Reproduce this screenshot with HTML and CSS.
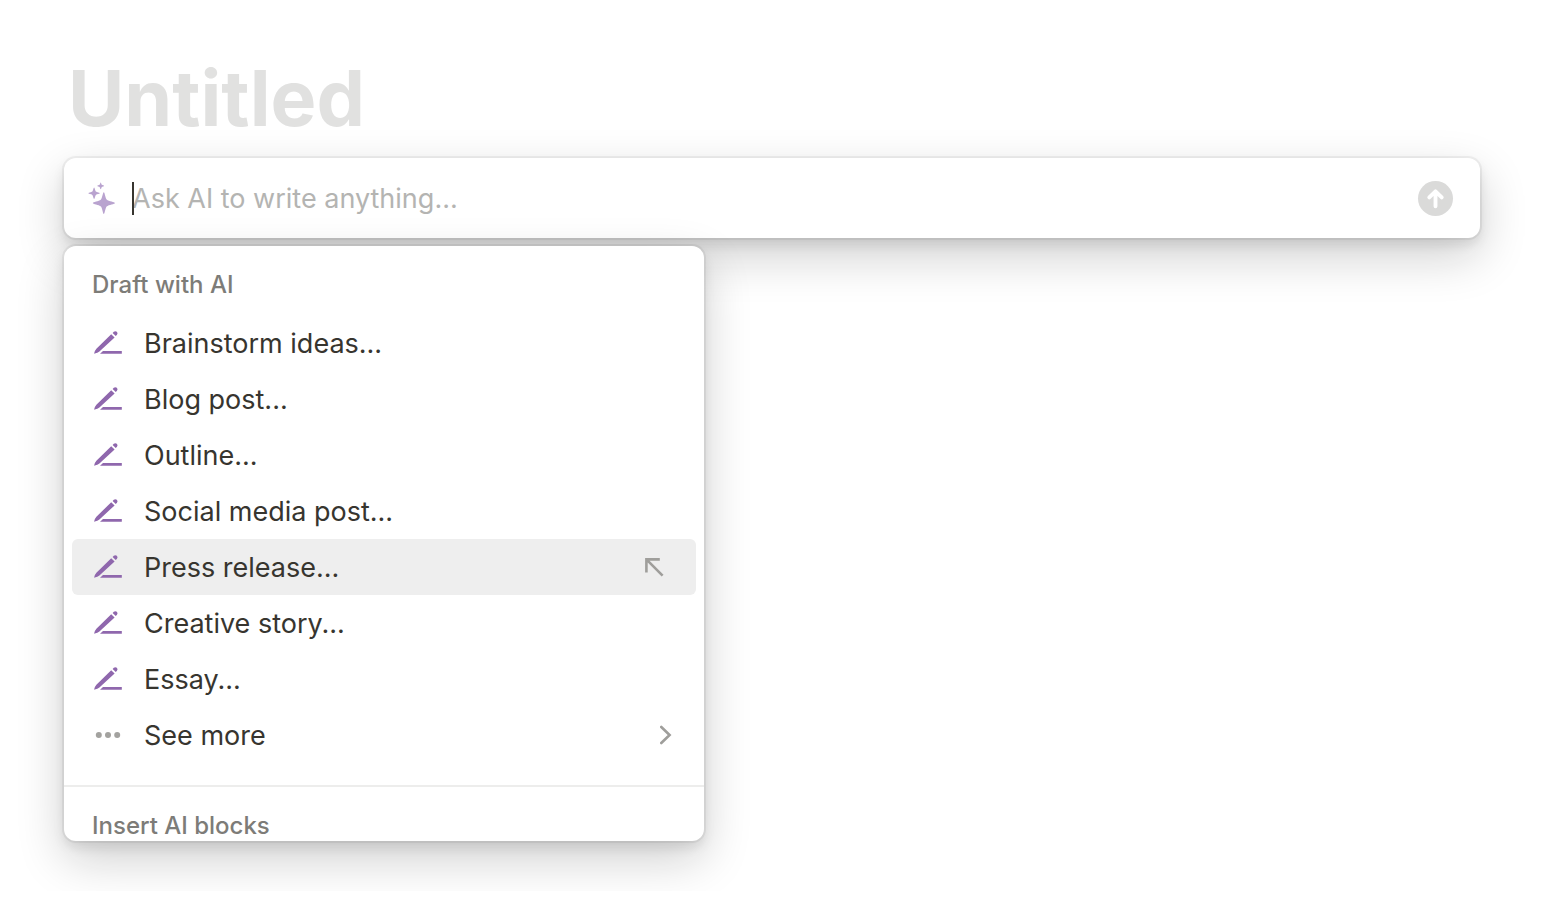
FILE: index.html
```html
<!DOCTYPE html>
<html lang="en">
<head>
    <meta charset="UTF-8">
    <meta name="viewport" content="width=device-width, initial-scale=1.0">
    <title>Untitled</title>
    <link rel="stylesheet" href="styles.css">
</head>
<body>
    <!-- Shared icons -->
    <svg class="icon-defs" width="0" height="0" aria-hidden="true">
        <symbol id="icon-pen" viewBox="0 0 28 28">
            <path d="M17.2 5.2 2.4 19.8Q0.8 21.6 0.2 24.2Q0 24.9 0.8 24.6Q3.6 23.9 5.4 22.4L20.6 8.4Z"/>
            <path d="M18.6 4 19.8 2.8Q21.3 1.6 22.8 2.8Q24.2 4.3 23 5.8L21.7 7.1Z"/>
            <path d="M9 22H27.8V24.8H6Z"/>
        </symbol>
    </svg>

    <main class="page">
        <h1 class="page-title">Untitled</h1>

        <form class="prompt">
            <svg class="prompt-icon" viewBox="0 0 28 32" aria-hidden="true">
                <path d="M15.8 10.2C16.8 10.2 17 15 18.6 17.4C20.8 19.4 27 19.8 27 21C27 22.2 20.8 22.6 18.6 24.6C17 27 16.8 32 15.8 32C14.8 32 14.6 27 13 24.6C10.8 22.6 4.8 22.2 4.8 21C4.8 19.8 10.8 19.4 13 17.4C14.6 15 14.8 10.2 15.8 10.2Z"/>
                <path d="M6.1 5.6C6.8 5.6 6.9 8.4 7.8 9.6C9 10.6 11.8 10.6 11.8 11.3C11.8 12 9 12 7.8 13C6.9 14.2 6.8 17 6.1 17C5.4 17 5.3 14.2 4.4 13C3.2 12 0.4 12 0.4 11.3C0.4 10.6 3.2 10.6 4.4 9.6C5.3 8.4 5.4 5.6 6.1 5.6Z"/>
                <path d="M12.7 0.5C13.1 0.5 13.3 2.2 13.8 2.8C14.4 3.2 16.1 3.4 16.1 3.9C16.1 4.4 14.4 4.4 13.8 4.9C13.3 5.5 13.1 7.3 12.7 7.3C12.3 7.3 12.1 5.5 11.6 4.9C11 4.4 9.3 4.4 9.3 3.9C9.3 3.4 11 3.2 11.6 2.8C12.1 2.2 12.3 0.5 12.7 0.5Z"/>
            </svg>
            <div class="prompt-field">
                <input class="prompt-input" type="text" aria-label="Ask AI to write anything" placeholder="Ask AI to write anything...">
                <span class="caret"></span>
            </div>
            <button class="prompt-send" type="button" aria-label="Send">
                <svg viewBox="0 0 36 36" aria-hidden="true">
                    <path d="M18 26V11M11.6 16.8 18 10.6l6.4 6.2"/>
                </svg>
            </button>
        </form>

        <div class="menu">
            <section class="menu-section">
                <h2 class="menu-label">Draft with AI</h2>
                <ul class="menu-list">
                    <li><button class="menu-item" type="button"><svg class="item-icon"><use href="#icon-pen"/></svg>Brainstorm ideas...</button></li>
                    <li><button class="menu-item" type="button"><svg class="item-icon"><use href="#icon-pen"/></svg>Blog post...</button></li>
                    <li><button class="menu-item" type="button"><svg class="item-icon"><use href="#icon-pen"/></svg>Outline...</button></li>
                    <li><button class="menu-item" type="button"><svg class="item-icon"><use href="#icon-pen"/></svg>Social media post...</button></li>
                    <li>
                        <button class="menu-item active" type="button">
                            <svg class="item-icon"><use href="#icon-pen"/></svg>Press release...
                            <svg class="item-insert" viewBox="0 0 20 20" aria-hidden="true"><path d="M2.4 15.4V2.4H15.8M2.4 2.4 18.6 18.6"/></svg>
                        </button>
                    </li>
                    <li><button class="menu-item" type="button"><svg class="item-icon"><use href="#icon-pen"/></svg>Creative story...</button></li>
                    <li><button class="menu-item" type="button"><svg class="item-icon"><use href="#icon-pen"/></svg>Essay...</button></li>
                    <li>
                        <button class="menu-item" type="button">
                            <svg class="item-icon more" viewBox="0 0 28 28" aria-hidden="true">
                                <circle cx="4.8" cy="14" r="3"/>
                                <circle cx="14" cy="14" r="3"/>
                                <circle cx="23.2" cy="14" r="3"/>
                            </svg>See more
                            <svg class="item-chevron" viewBox="0 0 12 20" aria-hidden="true"><path d="M1.3 2 9.6 10 1.3 18"/></svg>
                        </button>
                    </li>
                </ul>
            </section>
            <section class="menu-section">
                <h2 class="menu-label">Insert AI blocks</h2>
            </section>
        </div>
    </main>
</body>
</html>
```
FILE: styles.css
```css
* {
    box-sizing: border-box;
}
body {
    margin: 0;
    background: #fff;
    color: #37352f;
    font-family: Inter, "Liberation Sans", sans-serif;
    font-size: 27px;
}
.icon-defs {
    position: absolute;
}
.page {
    padding: 50px 64px;
}
.page-title {
    margin: 0 0 12px;
    padding: 0 4px;
    font-size: 77px;
    line-height: 96px;
    font-weight: 700;
    color: #e1e1e0;
}
.prompt,
.menu {
    background: #fff;
    border-radius: 12px;
    box-shadow: 0 0 0 2px rgba(15, 15, 15, 0.05), 0 6px 12px rgba(15, 15, 15, 0.1), 0 18px 48px rgba(15, 15, 15, 0.2);
}
.prompt {
    display: flex;
    align-items: center;
    height: 80px;
    padding: 0 27px 0 24px;
}
.prompt-icon {
    width: 28px;
    height: 32px;
    margin-right: 16px;
    fill: #b9a3cf;
}
.prompt-field {
    position: relative;
    flex: 1;
}
.prompt-input {
    display: block;
    width: 100%;
    height: 40px;
    padding: 0;
    border: none;
    outline: none;
    background: none;
    color: inherit;
    font: inherit;
}
.prompt-input::placeholder {
    color: #b4b4b2;
    opacity: 1;
}
.caret {
    position: absolute;
    left: 0;
    top: 4px;
    width: 2px;
    height: 33px;
    background: #37352f;
}
.prompt-send {
    width: 35px;
    height: 35px;
    padding: 0;
    border: none;
    border-radius: 50%;
    background: #dadad9;
    cursor: pointer;
}
.prompt-send svg {
    display: block;
    fill: none;
    stroke: #fff;
    stroke-width: 4;
    stroke-linecap: round;
    stroke-linejoin: round;
}

.menu {
    position: relative;
    max-width: 640px;
    max-height: 595px;
    margin-top: 8px;
    overflow: hidden;
}
.menu-section {
    padding: 24px 8px 22px;
}
.menu-section + .menu-section {
    border-top: 2px solid #ededec;
}
.menu-label {
    margin: 0 0 15px;
    padding: 0 20px;
    font-size: 24px;
    line-height: 30px;
    font-weight: 500;
    color: #7d7c78;
}
.menu-list {
    margin: 0;
    padding: 0;
    list-style: none;
}
.menu-item {
    display: flex;
    align-items: center;
    width: 100%;
    height: 56px;
    padding: 0 24px 0 22px;
    border: none;
    border-radius: 6px;
    background: none;
    color: inherit;
    font: inherit;
    text-align: left;
    cursor: pointer;
}
.menu-item:hover,
.menu-item.active {
    background: #eee;
}
.item-icon {
    width: 28px;
    height: 28px;
    margin-right: 22px;
    fill: #8f67ad;
}
.item-icon.more {
    fill: #a3a29f;
}
.item-insert,
.item-chevron {
    margin-left: auto;
    fill: none;
    stroke: #9f9e9b;
    stroke-width: 2.6;
}
.item-insert {
    width: 20px;
    height: 20px;
    margin-right: 8px;
}
.item-chevron {
    width: 12px;
    height: 20px;
    stroke-linecap: round;
}
```
